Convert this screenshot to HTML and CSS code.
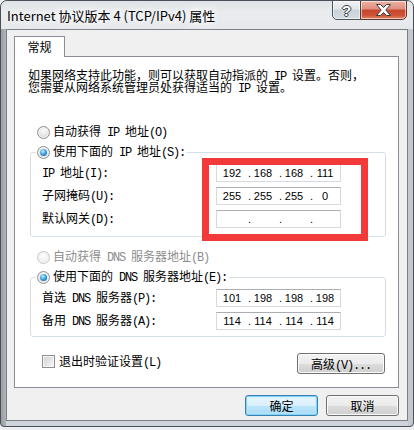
FILE: index.html
```html
<!DOCTYPE html>
<html lang="zh-CN">
<head>
<meta charset="utf-8">
<title>Internet 协议版本 4 (TCP/IPv4) 属性</title>
<link rel="stylesheet" href="styles.css">
</head>
<body>
<div class="window">
  <div class="titlebar">
    <div class="title">Internet 协议版本 4 (TCP/IPv4) 属性</div>
    <div class="caption-btns">
      <div class="cap help"><span>?</span></div>
      <div class="cap close">
        <svg width="15" height="12" viewBox="0 0 15 12"><polygon points="0.5,0.5 4.5,0.5 7.5,3.5 10.5,0.5 14.5,0.5 9.8,6 14.5,11.5 10.5,11.5 7.5,8.5 4.5,11.5 0.5,11.5 5.2,6" fill="#fff" stroke="#3a3d42" stroke-width="1" stroke-linejoin="round"/></svg>
      </div>
    </div>
  </div>
  <div class="client">
    <div class="tabs"><div class="tab">常规</div></div>
    <div class="panel">
      <div class="desc">
        <div class="line">如果网络支持此功能，则可以获取自动指派的<span class="en"> IP </span>设置。否则，</div>
        <div class="line">您需要从网络系统管理员处获得适当的<span class="en"> IP </span>设置。</div>
      </div>
      <div class="opt first"><span class="radio"></span><span>自动获得<span class="en"> IP </span>地址<span class="en">(O)</span></span></div>
      <fieldset class="group ipgroup">
        <legend class="opt"><span class="radio on"></span><span>使用下面的<span class="en"> IP </span>地址<span class="en">(S):</span></span></legend>
        <div class="row"><label><span class="en">IP </span>地址<span class="en">(I):</span></label>
          <div class="ipbox"><span>192</span><i>.</i><span>168</span><i>.</i><span>168</span><i>.</i><span>111</span></div></div>
        <div class="row"><label>子网掩码<span class="en">(U):</span></label>
          <div class="ipbox"><span>255</span><i>.</i><span>255</span><i>.</i><span>255</span><i>.</i><span>0</span></div></div>
        <div class="row"><label>默认网关<span class="en">(D):</span></label>
          <div class="ipbox"><span></span><i>.</i><span></span><i>.</i><span></span><i>.</i><span></span></div></div>
      </fieldset>
      <div class="opt dns-auto disabled"><span class="radio off"></span><span>自动获得<span class="en"> DNS </span>服务器地址<span class="en">(B)</span></span></div>
      <fieldset class="group dnsgroup">
        <legend class="opt"><span class="radio on"></span><span>使用下面的<span class="en"> DNS </span>服务器地址<span class="en">(E):</span></span></legend>
        <div class="row"><label>首选<span class="en"> DNS </span>服务器<span class="en">(P):</span></label>
          <div class="ipbox"><span>101</span><i>.</i><span>198</span><i>.</i><span>198</span><i>.</i><span>198</span></div></div>
        <div class="row"><label>备用<span class="en"> DNS </span>服务器<span class="en">(A):</span></label>
          <div class="ipbox"><span>114</span><i>.</i><span>114</span><i>.</i><span>114</span><i>.</i><span>114</span></div></div>
      </fieldset>
      <div class="bottomrow">
        <div class="check"><span class="box"></span><span>退出时验证设置<span class="en">(L)</span></span></div>
        <button class="btn adv">高级<span class="en">(V)...</span></button>
      </div>
    </div>
    <div class="actions">
      <button class="btn default">确定</button>
      <button class="btn">取消</button>
    </div>
  </div>
</div>
<div class="mark"></div>
</body>
</html>
```
FILE: styles.css
```css
* { box-sizing: border-box; }
html, body { margin: 0; padding: 0; }
body {
  position: relative;
  width: 414px;
  height: 430px;
  overflow: hidden;
  background: #eceef1;
  font-family: "Noto Sans CJK SC", sans-serif;
  font-size: 12px;
  color: #000;
}
.en {
  font-family: "Liberation Mono", monospace;
  font-size: 12px;
  letter-spacing: -1.2px;
  white-space: pre;
}

/* window frame */
.window {
  width: 414px;
  height: 427px;
  border: 1px solid #4a4f57;
  border-radius: 7px 7px 4px 4px;
  background:
    linear-gradient(to right, #9a9ea3 0, #b0b3b7 5px, transparent 5px, transparent calc(100% - 5px), #c4c9cf calc(100% - 5px)),
    linear-gradient(#d9dde2, #cfd4da);
  overflow: hidden;
}
.titlebar {
  height: 28px;
  display: flex;
  align-items: flex-start;
  background: linear-gradient(#dfe2e6, #e9ebee 40%, #e6e9ec);
}
.title {
  padding: 7px 0 0 6px;
  line-height: 16px;
  font-size: 13px;
  color: #000;
  white-space: nowrap;
  text-shadow: 0 0 6px #fff, 0 0 10px #fff, 0 0 14px #fff;
}
.caption-btns {
  margin-left: auto;
  margin-top: -1px;
  margin-right: 6px;
  display: flex;
}
.cap {
  height: 20px;
  border: 1px solid #50555d;
  display: flex;
  align-items: center;
  justify-content: center;
  box-shadow: inset 0 0 0 1px rgba(255,255,255,.55);
}
.help {
  width: 29px;
  border-radius: 0 0 0 5px;
  background: linear-gradient(#eef0f3, #e1e5ea 45%, #cbd2da 50%, #d5dbe2 100%);
}
.help span {
  font-family: "Liberation Sans", sans-serif;
  font-weight: bold;
  font-size: 15px;
  line-height: 15px;
  color: #fff;
  text-shadow: 1px 0 0 #3a3d42, -1px 0 0 #3a3d42, 0 1px 0 #3a3d42, 0 -1px 0 #3a3d42;
}
.close {
  width: 47px;
  margin-left: -1px;
  border-radius: 0 0 5px 0;
  border-color: #5b3a35;
  background: linear-gradient(#ecb3a5, #df8e7c 45%, #c8472e 50%, #cf5234 80%, #e38d6a 100%);
}
.close svg { display: block; }

/* client */
.client {
  margin: 0 5px;
  height: 392px;
  border: 1px solid #7a7f87;
  background: #f0f0f0;
  padding: 6px 8px 0 7px;
}
.tabs { display: flex; height: 20px; }
.tab {
  position: relative;
  z-index: 1;
  width: 51px;
  height: 21px;
  border: 1px solid #898c95;
  border-bottom: none;
  background: #fff;
  text-align: center;
  line-height: 19px;
}
.panel {
  width: 385px;
  height: 332px;
  border: 1px solid #898c95;
  background: #fff;
}
.desc {
  margin: 12px 0 0 13px;
  white-space: nowrap;
}
.desc .line { height: 12px; line-height: 12px; }
.opt {
  display: flex;
  align-items: center;
  height: 16px;
  white-space: nowrap;
  line-height: 16px;
}
.opt.first { margin: 31px 0 0 22px; }
.opt.dns-auto { margin: 12px 0 0 22px; }
.disabled { color: #8d8d8d; }

.radio {
  width: 13px;
  height: 13px;
  margin-right: 3px;
  border-radius: 50%;
  border: 1px solid #8f8f8f;
  background: radial-gradient(circle at 50% 35%, #fbfbfb, #d4d4d4);
  box-shadow: inset 0 0 0 1px #f2f2f2;
  display: flex;
  align-items: center;
  justify-content: center;
  flex: none;
}
.radio.on::after {
  content: "";
  width: 7px;
  height: 7px;
  border-radius: 50%;
  background: radial-gradient(circle at 40% 35%, #c4f0ff 0, #3fa9e6 45%, #0d4d88 100%);
}
.radio.off {
  border-color: #c6c6c6;
  background: radial-gradient(circle at 50% 35%, #fdfdfd, #e9e9e9);
}

.group {
  margin: 4px 12px 0 15px;
  padding: 4px 0 8px 0;
  border: 1px solid #d5dfe5;
  border-radius: 3px;
  min-width: 0;
}
.group legend {
  margin-left: 5px;
  padding: 0 2px 0 1px;
}
.dnsgroup { padding-bottom: 6px; }
.row {
  display: flex;
  align-items: center;
  height: 18px;
  padding-left: 11px;
  white-space: nowrap;
}
.row + .row { margin-top: 5px; }
.row label { width: 174px; line-height: 18px; }
.ipbox {
  width: 125px;
  height: 18px;
  border: 1px solid #d6d9de;
  border-top-color: #abadb3;
  background: #fff;
  display: grid;
  grid-template-columns: 24px 7px 24px 7px 24px 7px 24px;
  align-items: center;
  padding-left: 3px;
  font-family: "Liberation Sans", sans-serif;
  font-size: 11px;
  line-height: 16px;
}
.ipbox span { text-align: center; }
.ipbox i { font-style: normal; text-align: right; }

.bottomrow {
  display: flex;
  justify-content: space-between;
  align-items: flex-start;
  margin-top: 16px;
  padding: 0 13px 0 27px;
}
.check {
  display: flex;
  align-items: center;
  height: 13px;
  margin-top: 2px;
  line-height: 13px;
  white-space: nowrap;
}
.box {
  width: 13px;
  height: 13px;
  margin-right: 4px;
  border: 1px solid #8e8f8f;
  background: linear-gradient(135deg, #cfd1d4, #f7f7f7);
  box-shadow: inset 0 0 0 1px #f6f6f6;
}

.btn {
  font-family: "Noto Sans CJK SC", sans-serif;
  font-size: 12px;
  color: #000;
  height: 21px;
  padding: 0;
  border: 1px solid #707070;
  border-radius: 3px;
  background: linear-gradient(#f2f2f2 0%, #ebebeb 50%, #dddddd 51%, #cfcfcf 100%);
  box-shadow: inset 0 0 0 1px #fbfbfb;
  line-height: 19px;
  text-align: center;
}
.adv { width: 88px; }
.actions {
  display: flex;
  justify-content: flex-end;
  gap: 8px;
  margin-top: 7px;
}
.actions .btn { width: 73px; }
.btn.default {
  border-color: #3c7fb1;
  background: linear-gradient(#eaf6fd 0%, #d9f0fc 50%, #bee6fd 51%, #a7d9f5 100%);
  box-shadow: inset 0 0 0 1px #7fd3f5, inset 0 0 3px 1px #c2eefc;
}

/* red annotation frame drawn over the dialog */
.mark {
  position: absolute;
  left: 202px;
  top: 158px;
  width: 166px;
  height: 83px;
  border: 7px solid #f23a3a;
}
```
